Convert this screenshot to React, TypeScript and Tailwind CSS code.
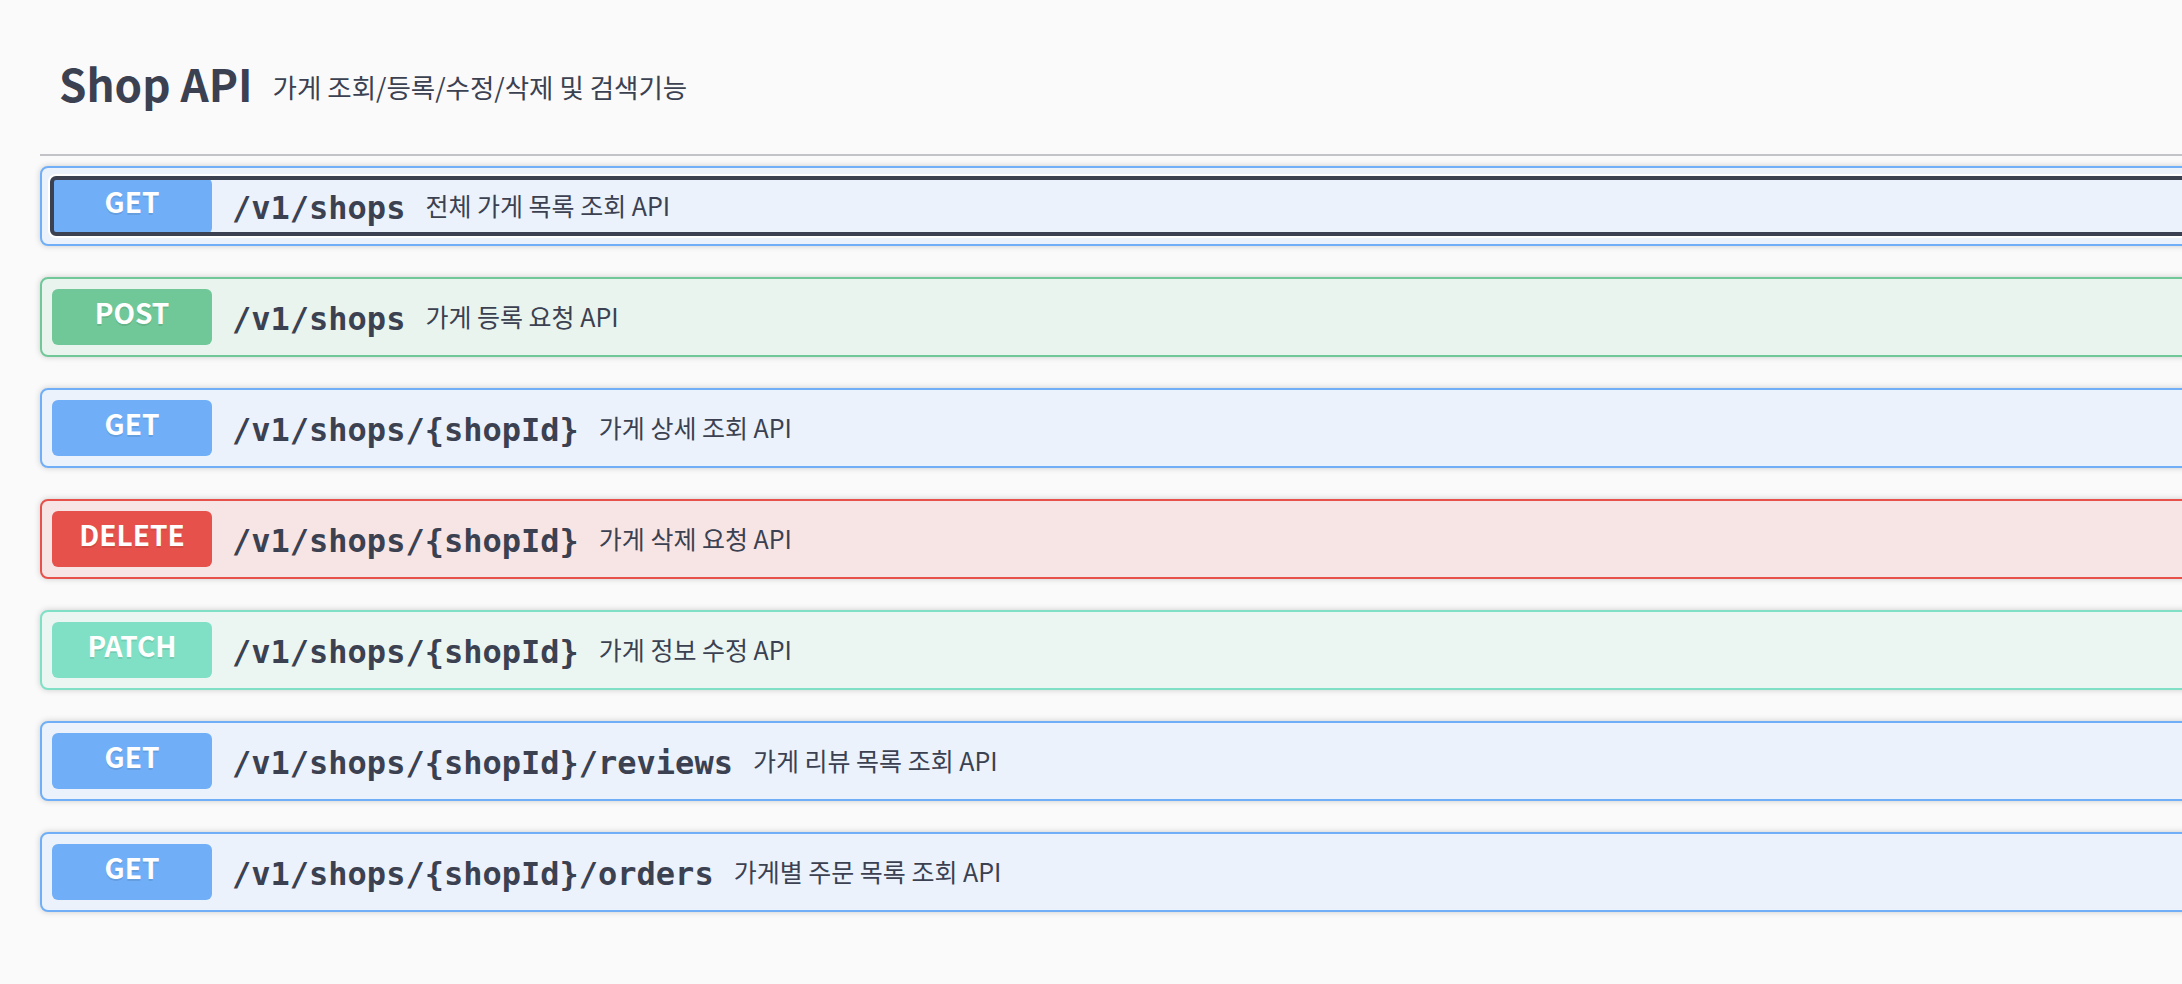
import React from "react";

type Method = "GET" | "POST" | "DELETE" | "PATCH";

const methodStyle: Record<Method, { row: string; badge: string }> = {
  GET: {
    row: "border-[#70aff7] bg-[#ebf2fb]",
    badge: "bg-[#70aff7]",
  },
  POST: {
    row: "border-[#70c898] bg-[#e9f4ee]",
    badge: "bg-[#70c898]",
  },
  DELETE: {
    row: "border-[#e6514b] bg-[#f7e5e5]",
    badge: "bg-[#e6514b]",
  },
  PATCH: {
    row: "border-[#7fe0c5] bg-[#ebf6f3]",
    badge: "bg-[#7fe0c5]",
  },
};

const operations: {
  method: Method;
  path: string;
  summary: string;
  focused?: boolean;
}[] = [
  { method: "GET", path: "/v1/shops", summary: "전체 가게 목록 조회 API", focused: true },
  { method: "POST", path: "/v1/shops", summary: "가게 등록 요청 API" },
  { method: "GET", path: "/v1/shops/{shopId}", summary: "가게 상세 조회 API" },
  { method: "DELETE", path: "/v1/shops/{shopId}", summary: "가게 삭제 요청 API" },
  { method: "PATCH", path: "/v1/shops/{shopId}", summary: "가게 정보 수정 API" },
  { method: "GET", path: "/v1/shops/{shopId}/reviews", summary: "가게 리뷰 목록 조회 API" },
  { method: "GET", path: "/v1/shops/{shopId}/orders", summary: "가게별 주문 목록 조회 API" },
];

const sans = "font-['Noto_Sans_CJK_KR','Noto_Sans',sans-serif]";

// one endpoint row (swagger-style opblock)
const OpBlock = ({ method, path, summary, focused }: (typeof operations)[number]) => {
  const s = methodStyle[method];
  return (
    <div
      className={`rounded-[8px] border-2 ${s.row} p-[10px] shadow-[0_0_6px_rgba(0,0,0,0.19)]`}
    >
      <div className="relative flex items-center">
        <span
          className={`${s.badge} ${sans} block h-[56px] w-[160px] shrink-0 rounded-[6px] text-center text-[28px] font-bold leading-[46px] text-white [text-shadow:0_2px_0_rgba(0,0,0,0.1)]`}
        >
          {method}
        </span>
        <span className="shrink-0 px-[20px] pt-[4px] font-['DejaVu_Sans_Mono',monospace] text-[32px] font-bold text-[#3b4151]">
          {path}
        </span>
        <span className={`${sans} text-[25px] text-[#3b4151]`}>{summary}</span>
        {focused && (
          <span className="pointer-events-none absolute -inset-[2px] rounded-[6px] border-4 border-[#3b4151] shadow-[0_0_0_2px_#ffffff]" />
        )}
      </div>
    </div>
  );
};

export default function App() {
  return (
    <div className="h-screen w-full overflow-hidden bg-[#fafafa]">
      <div className="w-[2300px] pl-[40px]">
        {/* tag header */}
        <div className="flex items-start border-b-2 border-[#c1c3c7] pb-[38px] pl-[19px] pt-[50px]">
          <span className={`${sans} text-[44px] font-bold leading-[66px] text-[#3b4151]`}>
            Shop API
          </span>
          <span
            className={`${sans} mt-[17px] pl-[20px] text-[26.5px] leading-[40px] text-[#3b4151]`}
          >
            가게 조회/등록/수정/삭제 및 검색기능
          </span>
        </div>

        <div className="mt-[10px] flex flex-col gap-[31px]">
          {operations.map((op, i) => (
            <OpBlock key={i} {...op} />
          ))}
        </div>
      </div>
    </div>
  );
}
